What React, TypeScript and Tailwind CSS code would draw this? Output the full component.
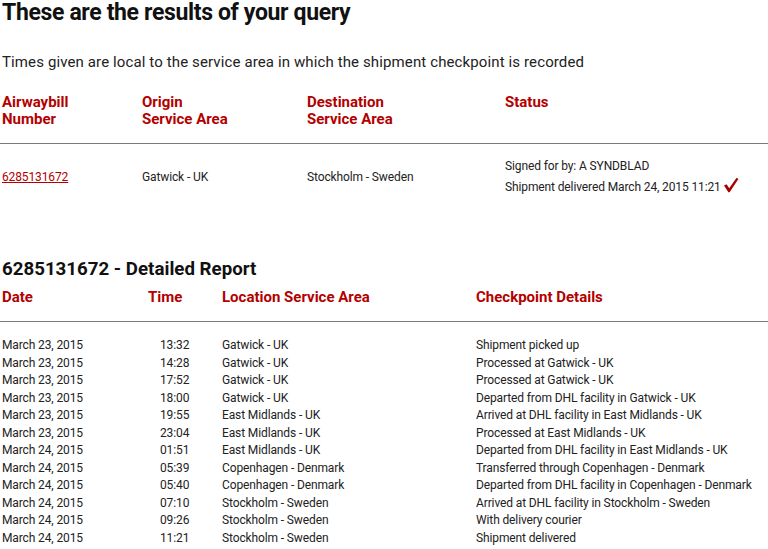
import React from "react";

const red = "text-[#b30000]";

const rows = [
  ["March 23, 2015", "13:32", "Gatwick - UK", "Shipment picked up"],
  ["March 23, 2015", "14:28", "Gatwick - UK", "Processed at Gatwick - UK"],
  ["March 23, 2015", "17:52", "Gatwick - UK", "Processed at Gatwick - UK"],
  ["March 23, 2015", "18:00", "Gatwick - UK", "Departed from DHL facility in Gatwick - UK"],
  ["March 23, 2015", "19:55", "East Midlands - UK", "Arrived at DHL facility in East Midlands - UK"],
  ["March 23, 2015", "23:04", "East Midlands - UK", "Processed at East Midlands - UK"],
  ["March 24, 2015", "01:51", "East Midlands - UK", "Departed from DHL facility in East Midlands - UK"],
  ["March 24, 2015", "05:39", "Copenhagen - Denmark", "Transferred through Copenhagen - Denmark"],
  ["March 24, 2015", "05:40", "Copenhagen - Denmark", "Departed from DHL facility in Copenhagen - Denmark"],
  ["March 24, 2015", "07:10", "Stockholm - Sweden", "Arrived at DHL facility in Stockholm - Sweden"],
  ["March 24, 2015", "09:26", "Stockholm - Sweden", "With delivery courier"],
  ["March 24, 2015", "11:21", "Stockholm - Sweden", "Shipment delivered"],
];

function Check() {
  return (
    <svg width="16" height="16" viewBox="0 0 16 16" className="inline-block ml-[2px] -mt-[6px] align-middle">
      <path d="M1 8.5 L3.6 7.2 L6.2 11.2 L13.6 0.8 L15.4 2 L6.6 15.2 L5.4 15.2 Z" fill="#a80000" />
    </svg>
  );
}

export default function App() {
  return (
    <div className="w-[768px] min-h-[549px] bg-white text-[#222] font-['Roboto',sans-serif]">
      <h1 className="text-[23px] leading-[26px] font-bold tracking-[-0.35px] pl-[2px] text-[#111]">
        These are the results of your query
      </h1>
      <p className="mt-[26px] text-[15px] leading-[20px] tracking-[0.12px] pl-[2px]">
        Times given are local to the service area in which the shipment checkpoint is recorded
      </p>

      <div className={`mt-[22px] flex text-[15px] leading-[17px] font-bold pl-[2px] pb-[15px] border-b border-[#7a7a7a] ${red}`}>
        <div className="w-[140px]">Airwaybill<br />Number</div>
        <div className="w-[165px]">Origin<br />Service Area</div>
        <div className="w-[198px]">Destination<br />Service Area</div>
        <div className="flex-1">Status</div>
      </div>

      <div className="flex items-center text-[12px] tracking-[-0.12px] pl-[2px] pt-[12px]">
        <div className="w-[140px]">
          <a href="#" className="underline text-[#b30000]">6285131672</a>
        </div>
        <div className="w-[165px]">Gatwick - UK</div>
        <div className="w-[198px]">Stockholm - Sweden</div>
        <div className="flex-1 leading-[21px]">
          <div>Signed for by: A SYNDBLAD</div>
          <div>
            Shipment delivered March 24, 2015 11:21
            <Check />
          </div>
        </div>
      </div>

      <h2 className="mt-[60px] text-[18.7px] leading-[22px] font-bold pl-[2px] text-[#111]">
        6285131672 - Detailed Report
      </h2>
      <div className={`mt-[9px] flex text-[15px] leading-[17px] font-bold pl-[2px] pb-[15px] border-b border-[#7a7a7a] ${red}`}>
        <div className="w-[146px]">Date</div>
        <div className="w-[74px]">Time</div>
        <div className="w-[254px]">Location Service Area</div>
        <div className="flex-1">Checkpoint Details</div>
      </div>

      <div className="pt-[15px] text-[12px] leading-[17.5px] tracking-[-0.12px]">
        {rows.map((r, i) => (
          <div key={i} className="flex pl-[2px]">
            <div className="w-[146px]">{r[0]}</div>
            <div className="w-[74px] pl-[12px]">{r[1]}</div>
            <div className="w-[254px]">{r[2]}</div>
            <div className="flex-1">{r[3]}</div>
          </div>
        ))}
      </div>
    </div>
  );
}
